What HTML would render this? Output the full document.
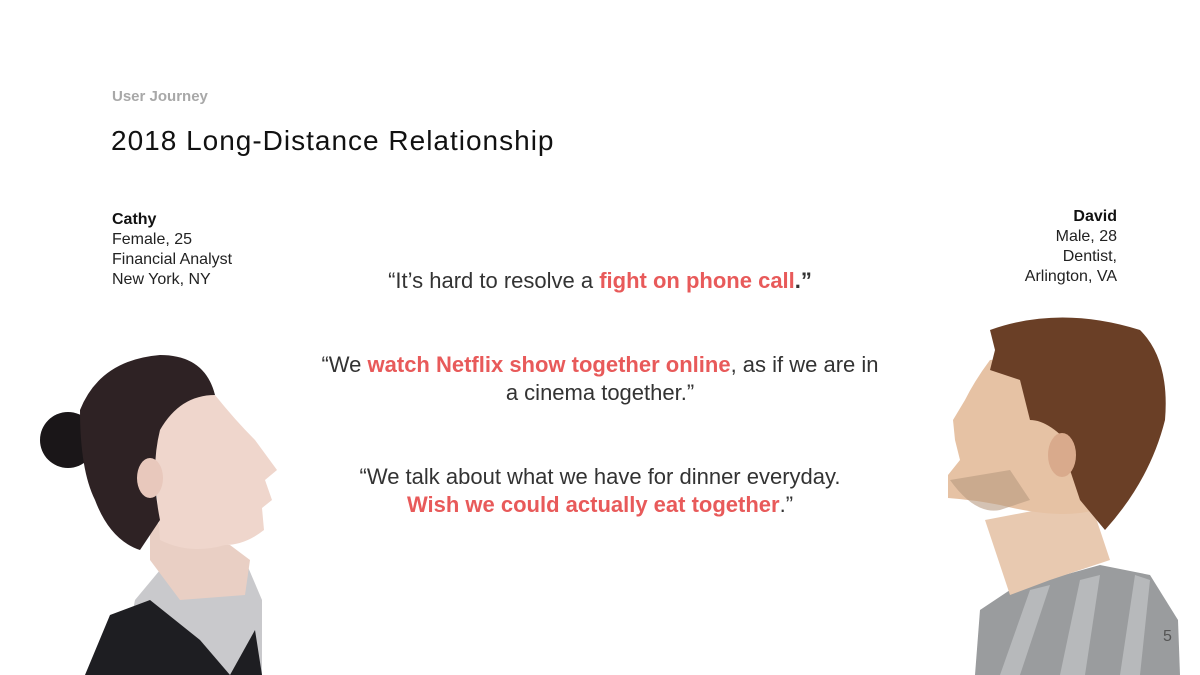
<!DOCTYPE html>
<html><head><meta charset="utf-8"><style>
body{margin:0;width:1200px;height:675px;background:#fff;position:relative;overflow:hidden;font-family:"Liberation Sans",Arial,sans-serif;color:#111}
.a{position:absolute}
.sub{left:112px;top:88px;font-size:15px;color:#a8a8a8;font-weight:bold}
.title{left:111px;top:125px;font-size:28px;color:#111;letter-spacing:1px}
.p{font-size:16px;line-height:20px;color:#222}
.q{font-size:22px;line-height:28px;color:#333;text-align:center;width:760px;left:220px}
.r{color:#e85a5a;font-weight:bold}
</style></head><body>
<svg class="a" style="left:0;top:0" width="1200" height="675">
<path d="M120 675 L135 600 L160 570 L245 560 L262 600 L262 675Z" fill="#c9c9cc"/>
<path d="M85 675 L110 615 L150 600 L200 640 L230 675Z" fill="#1e1e22"/>
<path d="M230 675 L255 630 L262 675Z" fill="#1e1e22"/>
<path d="M150 560 L150 520 L200 540 L230 545 L250 560 L245 595 L180 600Z" fill="#e9cfc4"/>
<path d="M150 400 Q190 370 215 395 Q235 420 255 440 L277 470 L265 480 L272 500 L262 508 L264 530 Q245 545 225 545 Q190 555 160 540Z" fill="#efd6cc"/>
<circle cx="68" cy="440" r="28" fill="#1a1618"/>
<path d="M80 410 Q100 360 160 355 Q205 355 215 395 Q180 395 160 430 Q150 470 160 520 L140 550 Q110 540 95 500 Q80 470 80 410Z" fill="#2e2224"/>
<ellipse cx="150" cy="478" rx="13" ry="20" fill="#e8c8bc"/>
<path d="M975 675 L980 610 L1010 590 L1100 565 L1150 575 L1178 620 L1180 675Z" fill="#9a9c9e"/>
<path d="M1000 675 L1030 590 L1050 585 L1020 675Z M1060 675 L1080 580 L1100 575 L1085 675Z M1120 675 L1135 575 L1150 580 L1140 675Z" fill="#b7b9bb"/>
<path d="M985 520 L1090 500 L1110 560 L1050 580 L1010 595Z" fill="#e8c9b0"/>
<path d="M990 360 L1050 355 L1090 450 L1095 510 Q1060 520 1000 505 Q975 500 948 498 L948 475 L960 460 L955 440 L953 420 L965 400 Q975 380 990 360Z" fill="#e6c2a4"/>
<path d="M990 330 Q1060 305 1140 330 Q1170 360 1165 420 Q1150 480 1105 530 L1080 500 L1070 470 L1075 450 Q1050 420 1030 420 L1020 380 L990 370 L995 350Z" fill="#6a3f26"/>
<path d="M950 480 Q975 515 1000 510 L1030 500 L1010 470 Z" fill="#b89a80" opacity=".6"/>
<ellipse cx="1062" cy="455" rx="14" ry="22" fill="#d9aa8c"/>
</svg>
<div class="a sub">User Journey</div>
<div class="a title">2018 Long-Distance Relationship</div>
<div class="a p" style="left:112px;top:210px"><b style="color:#111">Cathy</b><br>Female, 25<br>Financial Analyst<br>New York, NY</div>
<div class="a p" style="right:83px;top:207px;text-align:right"><b style="color:#111">David</b><br>Male, 28<br>Dentist,<br>Arlington, VA</div>
<div class="a q" style="top:267px">“It’s hard to resolve a <span class="r">fight on phone call</span><b>.”</b></div>
<div class="a q" style="top:351px">“We <span class="r">watch Netflix show together online</span>, as if we are in<br>a cinema together.”</div>
<div class="a q" style="top:463px">“We talk about what we have for dinner everyday.<br><span class="r">Wish we could actually eat together</span>.”</div>
<div class="a" style="left:1163px;top:628px;font-size:16px;color:#555">5</div>
</body></html>
